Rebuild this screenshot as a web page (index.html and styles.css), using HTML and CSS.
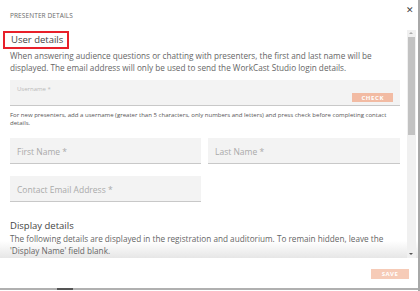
FILE: index.html
```html
<!DOCTYPE html>
<html>
<head>
<meta charset="utf-8">
<link rel="stylesheet" href="styles.css">
</head>
<body>
<div class="dialog">
  <div class="header">
    <span class="title">PRESENTER DETAILS</span>
    <span class="close">✕</span>
  </div>
  <div class="scrollwrap">
    <div class="content">
      <h2 class="section highlight">User details</h2>
      <p class="intro">When answering audience questions or chatting with presenters, the first and last name will be displayed. The email address will only be used to send the WorkCast Studio login details.</p>
      <div class="field wide">
        <span class="small-label">Username *</span>
        <span class="check">CHECK</span>
      </div>
      <p class="help">For new presenters, add a username (greater than 5 characters, only numbers and letters) and press check before completing contact details.</p>
      <div class="row">
        <div class="field"><span class="ph">First Name *</span></div>
        <div class="field"><span class="ph">Last Name *</span></div>
      </div>
      <div class="row">
        <div class="field email"><span class="ph">Contact Email Address *</span></div>
        <div></div>
      </div>
      <h2 class="section second">Display details</h2>
      <p class="intro">The following details are displayed in the registration and auditorium. To remain hidden, leave the 'Display Name' field blank.</p>
    </div>
    <div class="scrollbar">
      <span class="arrow up"></span>
      <span class="thumb"></span>
      <span class="arrow down"></span>
    </div>
  </div>
  <div class="footer">
    <span class="save">SAVE</span>
  </div>
  <div class="bottombar"><span class="seg"></span></div>
</div>
</body>
</html>
```

FILE: styles.css
```css
* { box-sizing: border-box; }
html, body { margin: 0; padding: 0; background: #fff; }
body { font-family: "Open Sans", "Liberation Sans", sans-serif; color: #555; width: 420px; height: 291px; overflow: hidden; }
.dialog { position: relative; width: 420px; height: 291px; border-right: 2px solid #a8a8a8; }
.header { height: 30px; display: flex; justify-content: space-between; align-items: flex-start; padding: 11px 4px 0 10px; }
.title { font-size: 6.5px; color: #6a6a6a; letter-spacing: 0.1px; }
.close { font-size: 9px; color: #444; margin-top: -8px; }
.scrollwrap { position: relative; height: 228px; overflow: hidden; background: linear-gradient(to bottom, #fff calc(100% - 17px), #e6e6e6); }
.content { padding: 1px 18px 0 10px; }
.section { margin: 0; font-weight: normal; font-size: 9.5px; color: #444; line-height: 12px; white-space: nowrap; }
.highlight { display: block; margin-left: -7px; padding: 1px 6px; border: 2px solid #e8202a; width: 66px; }
.intro { margin: 1px 0 0; font-size: 8.2px; line-height: 12px; color: #666; }
.field { background: #f3f3f3; border-bottom: 1.5px solid #c8c8c8; height: 26px; position: relative; }
.wide { margin-top: 6px; display: flex; flex-direction: column; justify-content: space-between; padding: 5px 7px 4px; }
.small-label { font-size: 6px; color: #b9b9b9; }
.check { align-self: flex-end; background: #f2bba3; color: #fff; font-size: 6px; font-weight: bold; letter-spacing: 0.6px; padding: 1px 9px 0; line-height: 8px; }
.help { margin: 5px 0 0; font-size: 6.05px; line-height: 8px; color: #555; }
.row { display: grid; grid-template-columns: 191px 192px; gap: 7px; margin-top: 11px; }
.row + .row { margin-top: 12px; }
.ph { position: absolute; left: 7px; top: 8px; font-size: 8.5px; color: #aaa; }
.second { margin-top: 18px; }
.scrollbar { position: absolute; right: 2px; top: 0; bottom: 0; width: 9px; background: #f0f0f0; display: flex; flex-direction: column; }
.arrow { height: 7px; position: relative; }
.arrow.up::after { content: ""; position: absolute; left: 2px; top: 2px; border: 2.5px solid transparent; border-bottom: 2.5px solid #aaa; border-top: 0; }
.arrow.down::after { content: ""; position: absolute; left: 2px; top: 2px; border: 2.5px solid transparent; border-top: 2.5px solid #555; border-bottom: 0; }
.thumb { height: 98px; background: #c2c2c2; margin: 0 1px; }
.arrow.down { margin-top: auto; }
.footer { display: flex; justify-content: flex-end; padding: 11px 9px 0 0; }
.save { background: #f6cbb7; color: #fff; font-size: 6px; font-weight: bold; letter-spacing: 0.5px; width: 38px; text-align: center; line-height: 10px; }
.bottombar { position: absolute; left: 0; right: 0; bottom: 1px; height: 2px; background: #b0b0b0; }
.seg { position: absolute; left: 57px; width: 16px; top: 0; bottom: 0; background: #555; }
```
